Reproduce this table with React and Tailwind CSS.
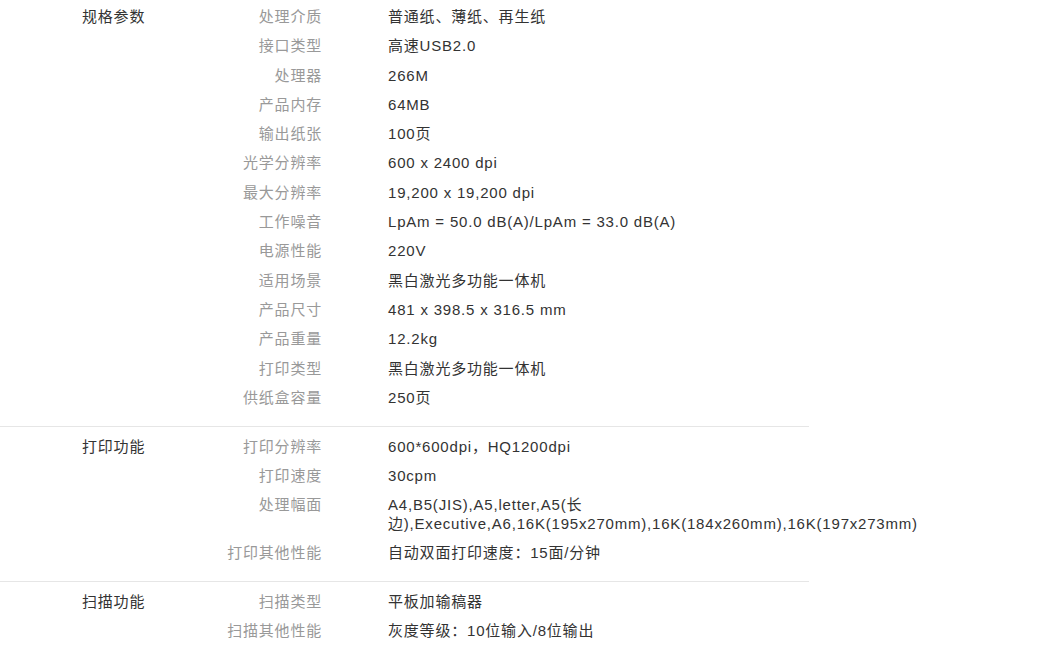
import React from 'react';

const sections = [
  {
    title: '规格参数',
    rows: [
      ['处理介质', '普通纸、薄纸、再生纸'],
      ['接口类型', '高速USB2.0'],
      ['处理器', '266M'],
      ['产品内存', '64MB'],
      ['输出纸张', '100页'],
      ['光学分辨率', '600 x 2400 dpi'],
      ['最大分辨率', '19,200 x 19,200 dpi'],
      ['工作噪音', 'LpAm = 50.0 dB(A)/LpAm = 33.0 dB(A)'],
      ['电源性能', '220V'],
      ['适用场景', '黑白激光多功能一体机'],
      ['产品尺寸', '481 x 398.5 x 316.5 mm'],
      ['产品重量', '12.2kg'],
      ['打印类型', '黑白激光多功能一体机'],
      ['供纸盒容量', '250页'],
    ],
  },
  {
    title: '打印功能',
    rows: [
      ['打印分辨率', '600*600dpi，HQ1200dpi'],
      ['打印速度', '30cpm'],
      ['处理幅面', 'A4,B5(JIS),A5,letter,A5(长边),Executive,A6,16K(195x270mm),16K(184x260mm),16K(197x273mm)'],
      ['打印其他性能', '自动双面打印速度：15面/分钟'],
    ],
  },
  {
    title: '扫描功能',
    rows: [
      ['扫描类型', '平板加输稿器'],
      ['扫描其他性能', '灰度等级：10位输入/8位输出'],
    ],
  },
];

const Section = ({ title, rows, first, last }) => (
  <div
    className={`flex w-[809px] pb-[18px] ${first ? 'pt-[7px]' : 'pt-[10px]'} ${last ? '' : 'border-b border-[#e6e6e6]'}`}
  >
    <div className="w-[190px] shrink-0 pl-[82px] text-[#333]">{title}</div>
    <div className="flex flex-col gap-y-[9.3px]">
      {rows.map(([k, v]) => (
        <div key={k} className="flex">
          <div className="w-[132px] shrink-0 text-right text-[#999]">{k}</div>
          <div className={`ml-[66px] w-[420px] text-[#333] ${v.length > 60 ? 'leading-[19px]' : ''}`}>{v}</div>
        </div>
      ))}
    </div>
  </div>
);

export default function App() {
  return (
    <div className="min-h-screen bg-white font-['Liberation_Sans','Noto_Sans_CJK_SC',sans-serif] text-[15px] leading-[20px] tracking-[0.8px]">
      {sections.map((s, i) => (
        <Section key={s.title} {...s} first={i === 0} last={i === sections.length - 1} />
      ))}
    </div>
  );
}
